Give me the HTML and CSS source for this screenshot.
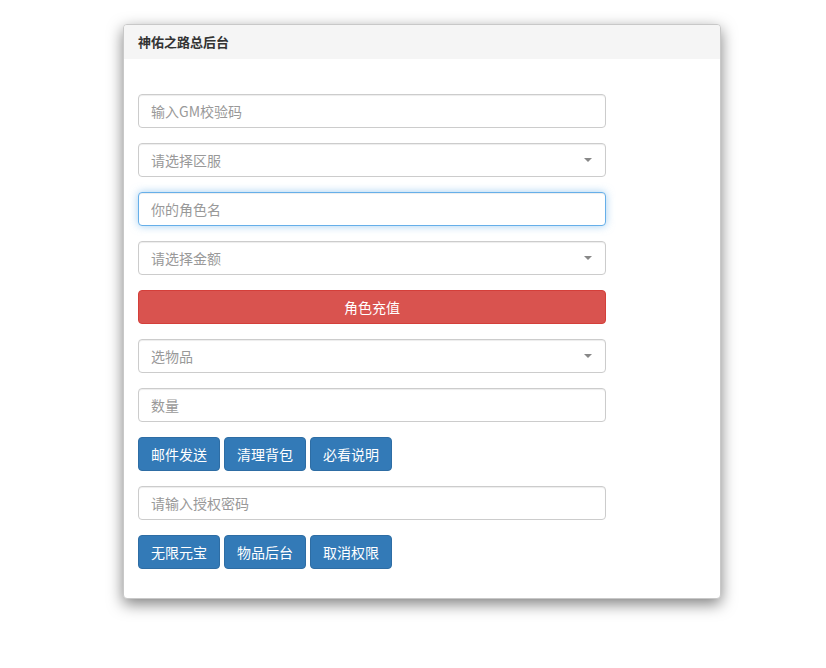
FILE: index.html
```html
<!DOCTYPE html>
<html lang="zh">
<head>
<meta charset="utf-8">
<title>神佑之路总后台</title>
<link rel="stylesheet" href="styles.css">
</head>
<body>
<div class="panel">
  <div class="panel-heading">神佑之路总后台</div>
  <div class="panel-body">
    <div class="field"><input class="control" type="text" placeholder="输入GM校验码"></div>
    <div class="field"><div class="control select"><span>请选择区服</span><i class="caret"></i></div></div>
    <div class="field"><input class="control focus" type="text" placeholder="你的角色名"></div>
    <div class="field"><div class="control select"><span>请选择金额</span><i class="caret"></i></div></div>
    <div class="field"><button class="btn btn-danger btn-block">角色充值</button></div>
    <div class="field"><div class="control select"><span>选物品</span><i class="caret"></i></div></div>
    <div class="field"><input class="control" type="text" placeholder="数量"></div>
    <div class="field btn-row">
      <button class="btn btn-primary">邮件发送</button>
      <button class="btn btn-primary">清理背包</button>
      <button class="btn btn-primary">必看说明</button>
    </div>
    <div class="field"><input class="control" type="text" placeholder="请输入授权密码"></div>
    <div class="field btn-row">
      <button class="btn btn-primary">无限元宝</button>
      <button class="btn btn-primary">物品后台</button>
      <button class="btn btn-primary">取消权限</button>
    </div>
  </div>
</div>
</body>
</html>
```
FILE: styles.css
```css
* { box-sizing: border-box; }
html, body { margin: 0; padding: 0; background: #fff; }
body {
  font-family: "Microsoft YaHei", "Noto Sans CJK SC", "Liberation Sans", sans-serif;
  font-size: 14px;
  color: #333;
  padding-top: 24px;
  padding-bottom: 60px;
}
.panel {
  width: 598px;
  margin-left: 123px;
  background: #fff;
  border: 1px solid #c8c8c8;
  border-radius: 4px;
  box-shadow: 0 5px 15px rgba(0,0,0,0.5);
  overflow: hidden;
}
.panel-heading {
  background: #f5f5f5;
  height: 34px;
  line-height: 33px;
  padding: 0 14px;
  font-size: 13px;
  font-weight: bold;
  color: #333;
}
.panel-body {
  padding: 35px 14px 14px;
}
.field {
  margin-bottom: 15px;
  width: 468px;
}
.control {
  display: block;
  width: 468px;
  height: 34px;
  padding: 0 12px 1px;
  font: inherit;
  font-size: 14px;
  color: #999;
  background: #fff;
  border: 1px solid #ccc;
  border-radius: 4px;
  box-shadow: inset 0 1px 1px rgba(0,0,0,0.075);
  outline: none;
}
.control::placeholder { color: #999; }
.control.focus {
  border-color: #66afe9;
  box-shadow: inset 0 1px 1px rgba(0,0,0,0.075), 0 0 8px rgba(102,175,233,0.6);
}
.select {
  display: flex;
  align-items: center;
  justify-content: space-between;
  padding-right: 13px;
}
.caret {
  width: 0;
  height: 0;
  margin-top: 1px;
  border-left: 4px solid transparent;
  border-right: 4px solid transparent;
  border-top: 4px solid #888;
}
.btn {
  display: inline-block;
  height: 34px;
  padding: 0 12px 1px;
  font: inherit;
  font-size: 14px;
  color: #fff;
  border: 1px solid transparent;
  border-radius: 4px;
  cursor: pointer;
}
.btn-block { display: block; width: 100%; }
.btn-danger { background: #d9534f; border-color: #d43f3a; }
.btn-primary { background: #337ab7; border-color: #2e6da4; width: 82px; }
.btn-row { display: flex; gap: 4px; }
```
